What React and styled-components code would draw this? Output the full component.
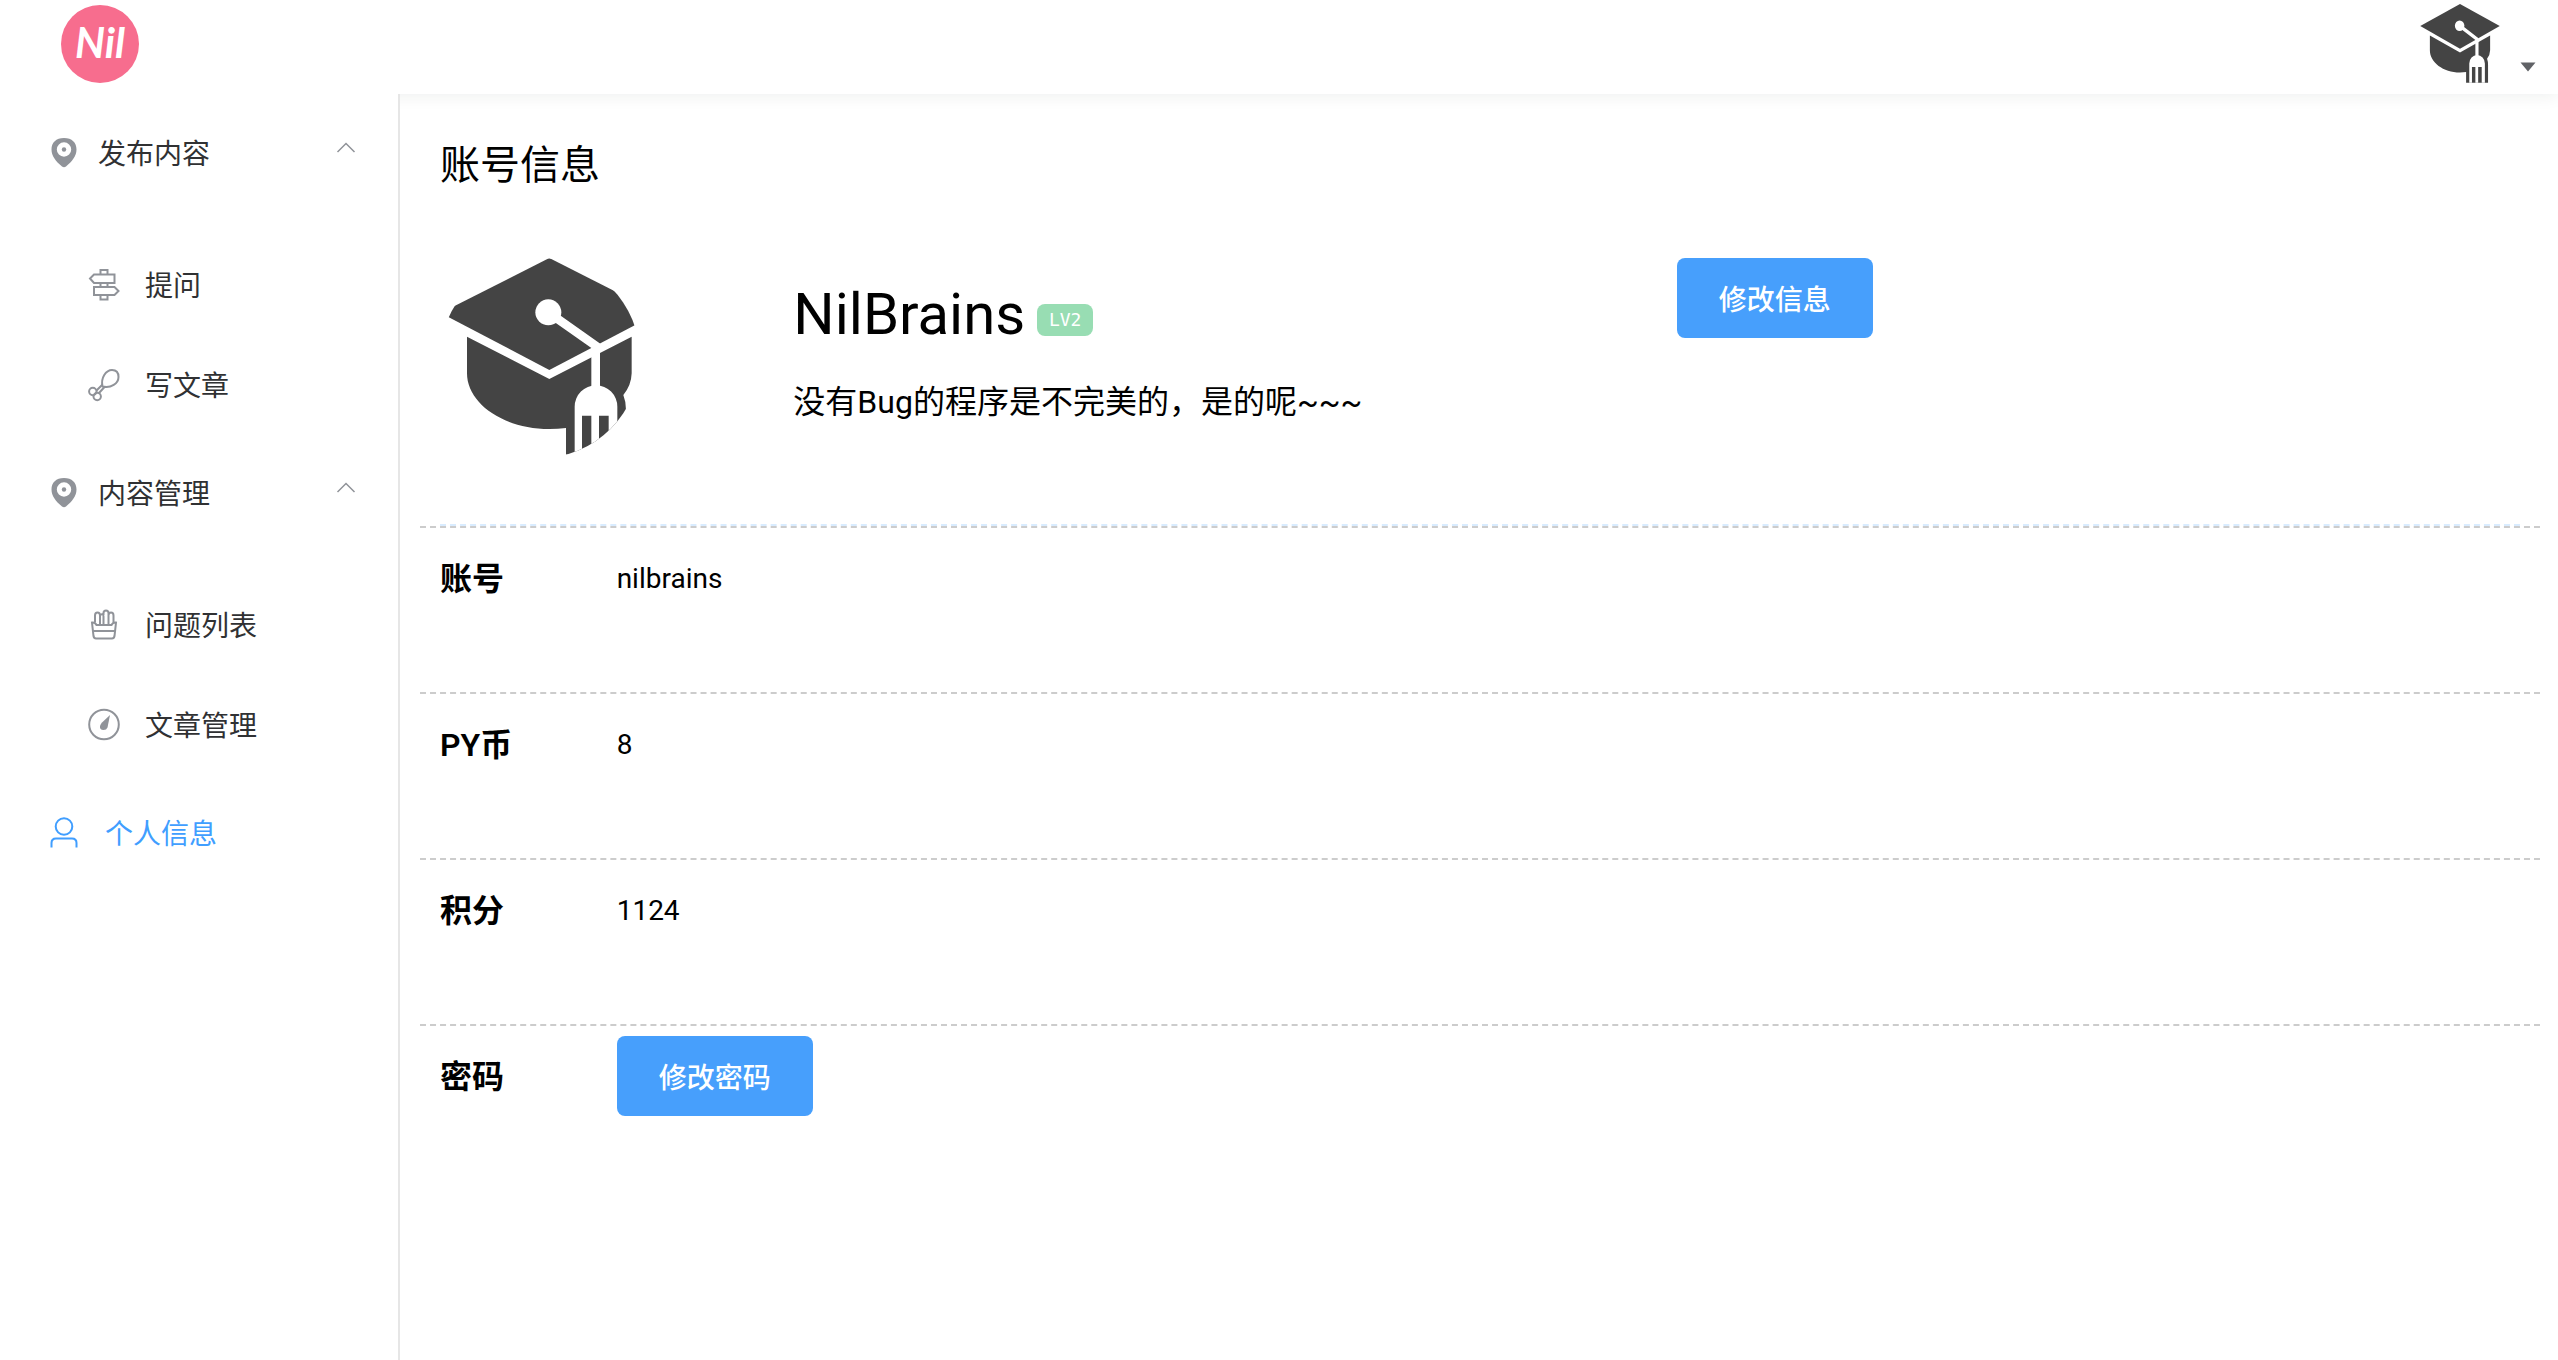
import { useState } from 'react';
import styled, { createGlobalStyle } from 'styled-components';

const GlobalStyle = createGlobalStyle`
    * {
        box-sizing: border-box;
    }
    body {
        margin: 0;
        background-color: #ffffff;
        color: #000000;
        font-family: Roboto, 'Noto Sans CJK SC', sans-serif;
        font-size: 28px;
    }
`;

const Page = styled.div`
    display: flex;
    flex-direction: column;
    min-height: 100vh;
`;

const Header = styled.header`
    display: flex;
    align-items: flex-start;
    justify-content: space-between;
    height: 94px;
    padding: 4px 22px 0 60px;
    background-color: #ffffff;
    box-shadow: 0 2px 16px #00281e12;
`;

const Logo = styled.a`
    display: block;
    height: 80px;
    width: 80px;
`;

const UserMenu = styled.button`
    display: flex;
    align-items: flex-end;
    gap: 20px;
    height: 80px;
    padding: 0;
    border: 0;
    background: none;
    cursor: pointer;
`;

const Caret = styled.svg`
    height: 10px;
    width: 16px;
    margin-bottom: 12px;
    fill: #606266;
`;

const Body = styled.div`
    display: flex;
    flex: 1;
`;

const Sidebar = styled.nav`
    position: relative;
    flex: none;
    width: 400px;
    padding-top: 2px;
    border-right: 2px solid #e6e6e6;
    background-color: #ffffff;
`;

const GroupTitle = styled.button`
    display: flex;
    align-items: center;
    gap: 10px;
    width: 100%;
    height: 112px;
    padding: 0 40px;
    border: 0;
    background: none;
    color: #303133;
    font-family: inherit;
    font-size: 28px;
    cursor: pointer;
`;

const Arrow = styled.svg`
    height: 24px;
    width: 24px;
    margin-left: auto;
    margin-bottom: 8px;
    fill: none;
    stroke: #909399;
    stroke-width: 1.5;
    transform: rotate(${(props) => (props.$open ? '0deg' : '180deg')});
`;

const GroupList = styled.div`
    padding: 26px 0 2px;
`;

const MenuLink = styled.a`
    display: flex;
    align-items: center;
    gap: 17px;
    height: ${(props) => (props.$nested ? '100px' : '112px')};
    padding-left: ${(props) => (props.$nested ? '80px' : '40px')};
    color: ${(props) => (props.$active ? '#409eff' : '#303133')};
    text-decoration: none;
`;

const Icon = styled.svg`
    flex: none;
    height: 36px;
    width: 48px;
    fill: none;
    stroke: ${(props) => (props.$active ? '#409eff' : '#909399')};
    stroke-width: 2;
`;

const Main = styled.main`
    flex: 1;
    padding: 42px 18px 40px 20px;
`;

const Title = styled.h1`
    margin: 0 0 62px;
    padding: 0 20px;
    font-size: 40px;
    font-weight: 400;
    line-height: 60px;
`;

const Profile = styled.section`
    display: grid;
    grid-template-columns: 4fr 10fr 10fr;
    align-items: start;
    padding: 0 0 66px;
`;

const Col = styled.div`
    min-width: 0;
    padding: 0 20px;
`;

const Avatar = styled.div`
    height: 200px;
    width: 200px;
    border-radius: 50%;
    overflow: hidden;
`;

const NameRow = styled.div`
    display: flex;
    align-items: center;
    gap: 12px;
`;

const Name = styled.h2`
    margin: 0;
    font-size: 58px;
    font-weight: 400;
    line-height: 112px;
`;

const Level = styled.span`
    height: 32px;
    width: 56px;
    margin-top: 12px;
    border-radius: 8px;
    background-color: #98ddb3;
    color: #ffffff;
    font-family: 'DejaVu Sans Mono', monospace;
    font-size: 18px;
    line-height: 32px;
    text-align: center;
`;

const Bio = styled.p`
    margin: 0;
    font-size: 32px;
    line-height: 64px;
`;

const Button = styled.button`
    height: 80px;
    padding: 0 42px;
    border: 0;
    border-radius: 8px;
    background-color: #479ffc;
    color: #ffffff;
    font-family: inherit;
    font-size: 28px;
    font-weight: 500;
    cursor: pointer;
`;

const Divider = styled.hr`
    margin: 0 20px;
    border: 0;
    border-top: 2px dashed #d9ecff;
`;

const Details = styled.dl`
    margin: 0;
`;

const DetailRow = styled.div`
    display: grid;
    grid-template-columns: 2fr 22fr;
    padding: 10px 0 74px;
    border-top: 2px dashed #cccccc;
    line-height: 82px;
`;

const Term = styled.dt`
    height: 80px;
    padding: 0 20px;
    font-size: 32px;
    font-weight: 600;
    white-space: nowrap;
`;

const Value = styled.dd`
    height: 80px;
    margin: 0;
    padding: 0 20px;
`;

const CapSvg = styled.svg`
    display: block;
    height: ${(props) => props.$size}px;
    width: ${(props) => props.$size}px;
    fill: #444444;
`;

// graduation cap whose tassel is a fork
function Cap({ size, viewBox }) {
    return (
        <CapSvg $size={size} viewBox={viewBox} preserveAspectRatio="none" aria-hidden="true">
            <path d="M388 84 L714 249 L388 420 L62 249 Z" />
            <path d="M141 320 L388 447 L635 320 V430 Q634 466 610 495 Q618 515 618 540 V674 H438 V594 Q414 597 388 597 C250 597 141 520 141 430 Z" />
            <circle cx="385" cy="247" r="39" fill="#fff" />
            <path d="M385 247 L527 347 V480" fill="none" stroke="#fff" strokeWidth="26" />
            <path d="M464 674 V530 A64 64 0 0 1 592 530 V674 H566 V557 H537 V674 H514 V557 H486 V674 Z" fill="#fff" />
        </CapSvg>
    );
}

function LocationIcon() {
    return (
        <Icon viewBox="0 0 48 36" aria-hidden="true">
            <path
                fill="#909399"
                stroke="none"
                fillRule="evenodd"
                d="M24 4 C32 4 36.500 8.500 36.500 15.500 C36.500 22 32 27.500 26 32.500 Q24 34 22 32.500 C16 27.500 11.500 22 11.500 15.500 C11.500 8.500 16 4 24 4 Z M24 8.300 A7.200 7.200 0 1 0 24 22.700 A7.200 7.200 0 1 0 24 8.300 Z"
            />
            <circle cx="24" cy="15.500" r="2.200" fill="#909399" stroke="none" />
        </Icon>
    );
}

function GuideIcon() {
    return (
        <Icon viewBox="0 0 48 36" aria-hidden="true">
            <path d="M20.500 8 V4 H27.500 V8 M20.500 17 V21 M27.500 17 V21 M20.500 29 V33.500 H27.500 V29" />
            <path d="M34.500 8.500 H14 L10 12.500 L14 17 H34.500 Z M14 21 H34.500 L38.500 25 L34.500 29 H14 Z" />
        </Icon>
    );
}

function ChickenIcon() {
    return (
        <Icon viewBox="0 0 48 36" aria-hidden="true">
            <path d="M22.500 20.500 C20.500 12 26 4 32 4 C36.500 4 38.500 7 38.500 11 C38.500 17.500 31 22.500 22.500 20.500 Z" />
            <path d="M22.500 18.500 L16.500 24.500 M24.500 21 L19 27" />
            <circle cx="12.800" cy="25.500" r="3.700" />
            <circle cx="17.200" cy="30.500" r="3.700" />
        </Icon>
    );
}

function FriesIcon() {
    return (
        <Icon viewBox="0 0 48 36" aria-hidden="true">
            <path d="M12 16.500 Q15 16 16.500 19 H31.500 Q33 16 36 16.500 L34.500 30 Q34 32.500 32 32.500 H16 Q14 32.500 13.500 30 Z M13 25 H35" />
            <path d="M15 16.500 V9.500 Q15 6.500 17.500 6.500 Q20 6.500 20 9.500 V19 M20 9 Q23.500 7 23.500 10.500 V19 M23.500 9 V7 Q23.500 4.500 26 4.500 Q28.500 4.500 28.500 7 V19 M28.500 9 Q29 6.500 31 6.500 Q33.500 6.500 33.500 9.500 V16.500" />
        </Icon>
    );
}

function DashboardIcon() {
    return (
        <Icon viewBox="0 0 48 36" aria-hidden="true">
            <circle cx="24" cy="18.500" r="14.800" />
            <path d="M30 9 L27.500 21.500 Q26.500 24 23.500 24 Q19.500 24 20 20 Q20.500 18 22 16.500 Z" fill="#909399" stroke="none" />
        </Icon>
    );
}

function UserIcon() {
    return (
        <Icon $active viewBox="0 0 48 36" aria-hidden="true">
            <circle cx="24" cy="12.500" r="8.300" />
            <path d="M11.500 33.500 V29 Q11.500 24.500 16 24.500 H32 Q36.500 24.500 36.500 29 V33.500" />
        </Icon>
    );
}

function MenuGroup({ title, items }) {
    const [open, setOpen] = useState(true);

    return (
        <div>
            <GroupTitle aria-expanded={open} onClick={() => setOpen(!open)}>
                <LocationIcon />
                {title}
                <Arrow $open={open} viewBox="0 0 24 24" aria-hidden="true">
                    <path d="M3.500 16 L12 7.500 L20.500 16" />
                </Arrow>
            </GroupTitle>
            {open && (
                <GroupList>
                    {items.map(({ label, Glyph }) => (
                        <MenuLink key={label} href="#" $nested>
                            <Glyph />
                            {label}
                        </MenuLink>
                    ))}
                </GroupList>
            )}
        </div>
    );
}

const publishItems = [
    { label: '提问', Glyph: GuideIcon },
    { label: '写文章', Glyph: ChickenIcon },
];

const manageItems = [
    { label: '问题列表', Glyph: FriesIcon },
    { label: '文章管理', Glyph: DashboardIcon },
];

const details = [
    { term: '账号', value: 'nilbrains' },
    { term: 'PY币', value: '8' },
    { term: '积分', value: '1124' },
    { term: '密码', value: <Button>修改密码</Button> },
];

function App() {
    return (
        <Page>
            <GlobalStyle />
            <Header>
                <Logo href="#" aria-label="Nil">
                    <svg width="80" height="80" viewBox="0 0 80 80">
                        <circle cx="40" cy="40" r="39" fill="#f76d8e" />
                        <text
                            x="40"
                            y="54"
                            fill="#fff"
                            fontFamily="Lato, sans-serif"
                            fontSize="42"
                            fontStyle="italic"
                            fontWeight="700"
                            textAnchor="middle"
                        >
                            Nil
                        </text>
                    </svg>
                </Logo>
                <UserMenu aria-label="NilBrains">
                    <Cap size={80} viewBox="60 84 656 600" />
                    <Caret viewBox="0 0 16 10" aria-hidden="true">
                        <path d="M0.500 0.500 H15.500 L8 9.500 Z" />
                    </Caret>
                </UserMenu>
            </Header>
            <Body>
                <Sidebar>
                    <MenuGroup title="发布内容" items={publishItems} />
                    <MenuGroup title="内容管理" items={manageItems} />
                    <MenuLink href="#" $active>
                        <UserIcon />
                        个人信息
                    </MenuLink>
                </Sidebar>
                <Main>
                    <Title>账号信息</Title>
                    <Profile>
                        <Col>
                            <Avatar>
                                <Cap size={200} viewBox="60 84 600 600" />
                            </Avatar>
                        </Col>
                        <Col>
                            <NameRow>
                                <Name>NilBrains</Name>
                                <Level>LV2</Level>
                            </NameRow>
                            <Bio>没有Bug的程序是不完美的，是的呢~~~</Bio>
                        </Col>
                        <Col>
                            <Button>修改信息</Button>
                        </Col>
                    </Profile>
                    <Divider />
                    <Details>
                        {details.map(({ term, value }) => (
                            <DetailRow key={term}>
                                <Term>{term}</Term>
                                <Value>{value}</Value>
                            </DetailRow>
                        ))}
                    </Details>
                </Main>
            </Body>
        </Page>
    );
}

export default App;
